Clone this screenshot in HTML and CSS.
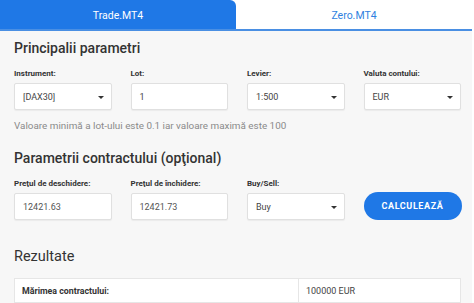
FILE: index.html
```html
<!DOCTYPE html>
<html lang="ro">
<head>
<meta charset="utf-8">
<link rel="stylesheet" href="styles.css">
</head>
<body>
<div class="page">
  <div class="tabs">
    <div class="tab active">Trade.MT4</div>
    <div class="tab">Zero.MT4</div>
  </div>
  <div class="panel">
    <h2 class="title first">Principalii parametri</h2>
    <div class="grid">
      <div class="field">
        <label>Instrument:</label>
        <div class="box select">[DAX30]<span class="caret"></span></div>
      </div>
      <div class="field">
        <label>Lot:</label>
        <div class="box">1</div>
      </div>
      <div class="field">
        <label>Levier:</label>
        <div class="box select">1:500<span class="caret"></span></div>
      </div>
      <div class="field">
        <label>Valuta contului:</label>
        <div class="box select">EUR<span class="caret"></span></div>
      </div>
    </div>
    <p class="hint">Valoare minimă a lot-ului este 0.1 iar valoare maximă este 100</p>

    <h2 class="title second">Parametrii contractului (opţional)</h2>
    <div class="grid">
      <div class="field">
        <label>Preţul de deschidere:</label>
        <div class="box muted">12421.63</div>
      </div>
      <div class="field">
        <label>Preţul de închidere:</label>
        <div class="box muted">12421.73</div>
      </div>
      <div class="field">
        <label>Buy/Sell:</label>
        <div class="box select">Buy<span class="caret"></span></div>
      </div>
      <div class="field end">
        <button class="calc">CALCULEAZĂ</button>
      </div>
    </div>

    <h2 class="title third">Rezultate</h2>
    <table class="results">
      <tr><th>Mărimea contractului:</th><td>100000 EUR</td></tr>
      <tr><th>&nbsp;</th><td>&nbsp;</td></tr>
    </table>
  </div>
</div>
</body>
</html>
```
FILE: styles.css
```css
* { box-sizing: border-box; }
html, body { margin: 0; padding: 0; background: #fff; }
body { font-family: Roboto, "Liberation Sans", Arial, sans-serif; color: #333; }
.page { width: 472px; }
.tabs { display: flex; height: 31px; border-bottom: 2px solid #4a8fe3; background: #fff; }
.tab { flex: 1; display: flex; align-items: center; justify-content: center; font-size: 10.5px; color: #2f7fe0; padding-top: 1px; }
.tab.active { background: #1f78e6; color: #fff; border-top-right-radius: 6px; }
.panel { background: #f7f7f7; padding: 0 11px 10px 14px; min-height: 272px; }
.title { margin: 0; font-size: 14px; line-height: 20px; font-weight: 500; color: #333; }
.title.first { padding-top: 7px; }
.title.second { margin-top: 15px; }
.title.third { margin-top: 27px; font-size: 14.5px; font-weight: 400; }
.grid { display: grid; grid-template-columns: repeat(4, 97.5px); column-gap: 19px; margin-top: 10px; }
.title.second + .grid { margin-top: 10px; }
.field { display: flex; flex-direction: column; }
.field.end { justify-content: flex-end; }
label { font-size: 8px; line-height: 12px; font-weight: 700; color: #333; margin-bottom: 3px; }
.box { height: 27px; background: #fff; border: 1px solid #e0e0e0; border-radius: 2px; font-size: 9px; color: #444; display: flex; align-items: center; padding-left: 8px; position: relative; box-shadow: 0 1px 1px rgba(0,0,0,0.05); }
.box.muted { color: #555; }
.caret { position: absolute; right: 7px; top: 12px; width: 0; height: 0; border-left: 3px solid transparent; border-right: 3px solid transparent; border-top: 3px solid #333; }
.hint { margin: 9px 0 0; font-size: 9.9px; line-height: 14px; color: #8a8a8a; }
.calc { height: 28px; width: 98px; border: 0; border-radius: 14px; background: #1f78e6; color: #fff; font-family: inherit; font-size: 9px; font-weight: 700; letter-spacing: 0.6px; padding: 0; }
.results { margin-top: 11px; width: 447px; border-collapse: collapse; background: #fff; }
.results th, .results td { border: 1px solid #e6e6e6; height: 24px; font-size: 8.8px; text-align: left; padding: 0 7px; }
.results th { width: 284px; font-weight: 700; color: #333; }
.results td { color: #444; font-size: 9px; }
```
